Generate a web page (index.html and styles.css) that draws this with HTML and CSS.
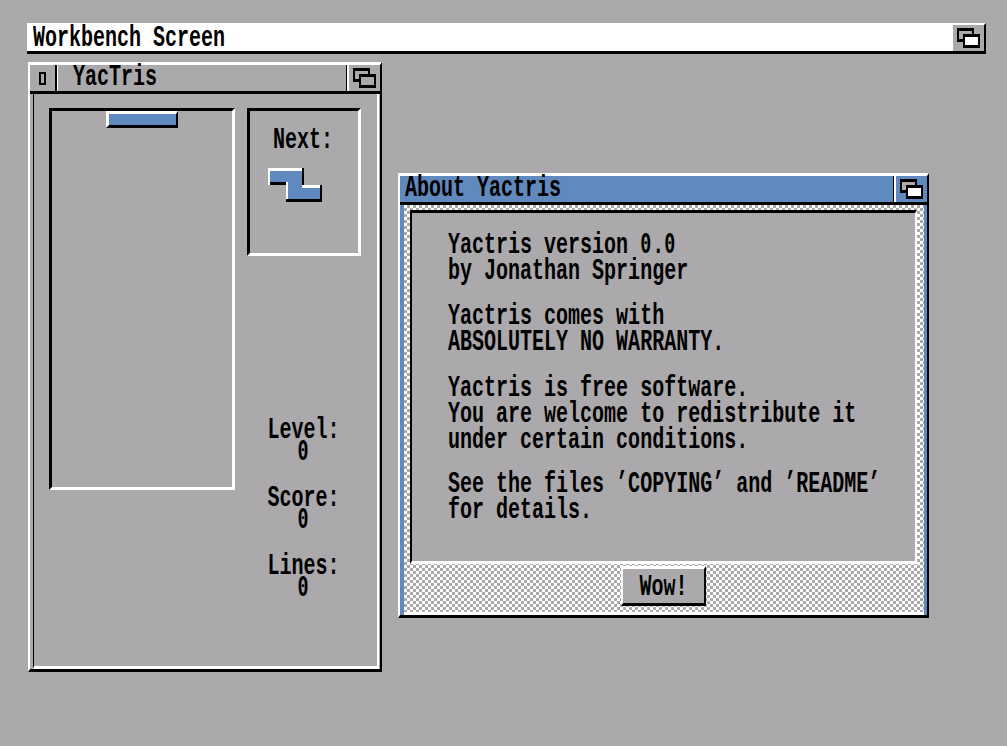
FILE: index.html
```html
<!DOCTYPE html>
<html lang="en">
<head>
<meta charset="utf-8">
<title>Workbench Screen</title>
<link rel="stylesheet" href="styles.css">
</head>
<body>
<main class="desktop">
  <header class="screenbar">
    <span class="txt screen-title">Workbench Screen</span>
    <span class="gadget screen-gadget">
      <svg class="depth" viewBox="0 0 31 26" width="31" height="26"><rect x="4" y="3" width="17" height="14" fill="#000"/><rect x="6" y="6" width="13" height="8" fill="#aba9ac"/><rect x="10" y="9" width="17" height="14" fill="#000"/><rect x="12" y="12" width="13" height="8" fill="#fff"/></svg>
    </span>
  </header>

  <section class="window game-window">
    <div class="titlebar">
      <span class="close-gadget"><i class="close-icon"></i></span>
      <span class="txt win-title game-title">YacTris</span>
      <span class="gadget win-gadget">
        <svg class="depth" viewBox="0 0 31 26" width="31" height="26"><rect x="4" y="3" width="17" height="14" fill="#000"/><rect x="6" y="6" width="13" height="8" fill="#aba9ac"/><rect x="10" y="9" width="17" height="14" fill="#000"/><rect x="12" y="12" width="13" height="8" fill="#aba9ac"/></svg>
      </span>
    </div>
    <div class="game-body">
      <div class="game-frame">
        <div class="field sunken">
          <div class="bar-piece"></div>
        </div>
        <div class="side">
          <div class="next sunken">
            <span class="txt center next-label">Next:</span>
            <svg class="next-piece" viewBox="0 0 54 34" width="54" height="34">
              <path d="M0 0H36V17H54V34H18V17H0Z" fill="#000"/>
              <path d="M2 3H34V20H52V31H20V14H2Z" fill="#6089bd"/>
              <path d="M0 0H34V3H2V17H0Z" fill="#fff"/>
              <path d="M18 14H20V31H18ZM34 17H54V20H34Z" fill="#fff"/>
              <path d="M52 17H54V34H52Z" fill="#000"/>
            </svg>
          </div>
          <div class="stats">
            <div class="stat"><span class="txt center stat-line">Level:</span><span class="txt center stat-line zero">0</span></div>
            <div class="stat"><span class="txt center stat-line">Score:</span><span class="txt center stat-line zero">0</span></div>
            <div class="stat"><span class="txt center stat-line">Lines:</span><span class="txt center stat-line zero">0</span></div>
          </div>
        </div>
      </div>
    </div>
  </section>

  <section class="window about-window">
    <div class="titlebar about-titlebar">
      <span class="txt win-title about-title">About Yactris</span>
      <span class="gadget win-gadget">
        <svg class="depth" viewBox="0 0 31 26" width="31" height="26"><rect x="4" y="3" width="17" height="14" fill="#000"/><rect x="6" y="6" width="13" height="8" fill="#aba9ac"/><rect x="10" y="9" width="17" height="14" fill="#000"/><rect x="12" y="12" width="13" height="8" fill="#fff"/></svg>
      </span>
    </div>
    <div class="about-body">
      <div class="dither">
        <div class="panel">
          <p class="para"><span class="txt line">Yactris version <span class="zero">0</span>.<span class="zero">0</span></span><span class="txt line">by Jonathan Springer</span></p>
          <p class="para"><span class="txt line">Yactris comes with</span><span class="txt line">ABSOLUTELY NO WARRANTY.</span></p>
          <p class="para"><span class="txt line">Yactris is free software.</span><span class="txt line">You are welcome to redistribute it</span><span class="txt line">under certain conditions.</span></p>
          <p class="para"><span class="txt line">See the files ’COPYING’ and ’README’</span><span class="txt line">for details.</span></p>
        </div>
        <div class="footer">
          <button class="wow" type="button"><span class="txt center">Wow!</span></button>
        </div>
      </div>
    </div>
  </section>
</main>
</body>
</html>
```

FILE: styles.css
```css
* { box-sizing: border-box; }
html, body { margin: 0; padding: 0; }
body { background: #aba9ac; color: #000; }

.desktop { position: relative; width: 1007px; height: 746px; overflow: hidden; background: #aba9ac; }

/* Tall, narrow, chunky text in the manner of the Topaz bitmap font */
.txt {
  display: block;
  font-family: "Liberation Mono", "DejaVu Sans Mono", monospace;
  font-weight: 700;
  font-size: 29px;
  white-space: pre;
  transform: scaleX(.69);
  transform-origin: left center;
}
.txt.center { text-align: center; transform-origin: center center; }
.zero { font-family: "DejaVu Sans Mono", monospace; font-size: 26.6px; font-weight: 700; letter-spacing: 1.4px; }

/* Screen title bar */
.screenbar {
  position: absolute; left: 27px; top: 23px; width: 959px; height: 31px;
  display: flex; justify-content: space-between;
  background: #fff;
  border-top: 2px solid #fff; border-right: 2px solid #000; border-bottom: 3px solid #000;
}
.screen-title { line-height: 28px; margin-left: 6px; }
.gadget { display: block; width: 31px; height: 26px; flex: none; }
.screen-gadget { background: #aba9ac; }
.depth { display: block; }

/* Windows */
.window {
  position: absolute;
  display: flex; flex-direction: column;
  border-top: 3px solid #fff; border-left: 2px solid #fff;
  border-right: 2px solid #000; border-bottom: 3px solid #000;
}
.titlebar {
  display: flex; align-items: stretch; flex: none;
  height: 29px;
  border-bottom: 3px solid #000;
}
.win-title { flex: 1; line-height: 26px; }
.win-gadget { box-shadow: -2px 0 0 #fff, -3px 0 0 #000; }

.close-gadget {
  display: flex; align-items: center; justify-content: center;
  width: 28px; flex: none;
  border-right: 1px solid #fff;
  box-shadow: inset -2px 0 0 #000;
  padding-right: 3px;
}
.close-icon { display: block; width: 7px; height: 13px; border: 2px solid #000; }

/* Game window */
.game-window { left: 28px; top: 62px; width: 354px; height: 610px; background: #aba9ac; }
.game-title { margin-left: 15px; }
.game-body { flex: 1; display: flex; padding: 0 1px 0 3px; }
.game-frame {
  flex: 1;
  display: grid; grid-template-columns: 186px 114px; column-gap: 12px; align-items: start;
  padding: 14px 0 0 15px;
  border-left: 1px solid #000; border-right: 2px solid #fff; border-bottom: 3px solid #fff;
}
.sunken {
  border-top: 3px solid #000; border-left: 3px solid #000;
  border-right: 3px solid #fff; border-bottom: 3px solid #fff;
}
.field { height: 382px; padding-left: 54px; }
.bar-piece {
  width: 72px; height: 17px;
  background: #6089bd;
  border-top: 3px solid #fff; border-left: 3px solid #fff;
  border-right: 2px solid #000; border-bottom: 3px solid #000;
}
.side { display: flex; flex-direction: column; }
.next { height: 148px; display: flex; flex-direction: column; padding-top: 16px; }
.next-label { line-height: 28px; margin-left: -2px; }
.next-piece { display: block; margin: 13px 0 0 18px; }
.stats { display: flex; flex-direction: column; row-gap: 25px; margin-top: 163px; }
.stat { margin-left: -1px; }
.stat-line { line-height: 23px; }
.stat-line.zero { margin-top: -3px; }

/* About window */
.about-window { left: 398px; top: 173px; width: 531px; height: 445px; background: #6089bd; }
.about-title { margin-left: 5px; }
.about-titlebar .win-gadget { background: #6089bd; }
.about-body { flex: 1; display: flex; padding: 0 3px 0 4px; min-height: 0; min-width: 0; }
.dither {
  flex: 1; min-width: 0; display: flex; flex-direction: column;
  padding: 5px 7px 0 6px;
  border-bottom: 3px solid #fff;
  background-color: #fff;
  background-image: repeating-conic-gradient(#aba9ac 0 25%, #fff 0 50%);
  background-size: 6px 6px;
}
.panel {
  height: 354px;
  flex: none;
  padding: 18px 0 0 36px;
  background: #aba9ac;
  border-top: 3px solid #000; border-left: 2px solid #000;
  border-right: 2px solid #fff; border-bottom: 3px solid #fff;
}
.para { margin: 0 0 19px; }
.para:nth-child(2) { margin-bottom: 20px; }
.para:nth-child(3) { margin-bottom: 18px; }
.line { line-height: 26px; }
.footer { flex: 1; display: flex; justify-content: center; align-items: flex-start; padding-top: 2px; }
.wow {
  display: block; width: 85px; height: 40px; padding: 0; margin: 0;
  background: #aba9ac; color: #000;
  border-style: solid; border-width: 3px 2px 3px 2px;
  border-color: #fff #000 #000 #fff;
  border-radius: 0;
}
.wow .txt { line-height: 38px; }
```
